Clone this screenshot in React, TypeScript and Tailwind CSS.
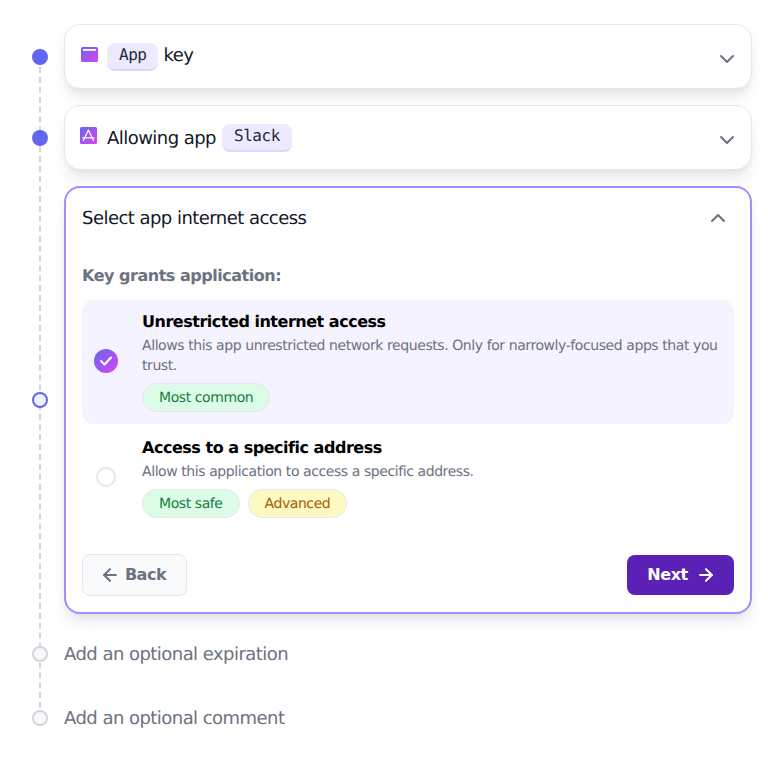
import { ArrowLeft, ArrowRight, ChevronDown, ChevronUp } from "lucide-react"

const gradientDefs = (
  <svg width="0" height="0" className="absolute">
    <defs>
      <linearGradient id="brand" x1="0" y1="0" x2="1" y2="1">
        <stop offset="0%" stopColor="#6366f1" />
        <stop offset="100%" stopColor="#d946ef" />
      </linearGradient>
    </defs>
  </svg>
)

function KeyIcon() {
  return (
    <svg width="17" height="15" viewBox="0 0 17 15" className="mb-1 shrink-0">
      <rect width="17" height="15" rx="1.5" fill="url(#brand)" />
      <rect x="2" y="2" width="13" height="1.8" fill="#fff" />
    </svg>
  )
}

function StoreIcon() {
  return (
    <svg width="17" height="17" viewBox="0 0 17 17" className="mb-1 -ml-px mr-px shrink-0">
      <rect width="17" height="17" rx="1.5" fill="url(#brand)" />
      <path
        d="M8.4 3 L3.4 13.6 M8.4 3 L13.4 13.6 M2.6 10.8 H14.2"
        stroke="#fff"
        strokeWidth="1.2"
        strokeLinecap="round"
        fill="none"
      />
    </svg>
  )
}

function Code({ children }: { children: string }) {
  return (
    <span className="inline-block rounded-lg border-b-2 border-[#ddd6fe] bg-[#ede9fe] px-3 pb-[3px] pt-px font-['DejaVu_Sans_Mono',monospace] text-base leading-[22px] text-gray-800">
      {children}
    </span>
  )
}

function Badge({ children, tone }: { children: string; tone: "green" | "yellow" }) {
  const toneClass = tone === "green" ? "bg-[#dcfce7] text-[#15803d]" : "bg-[#fef9c3] text-[#a16207]"
  return (
    <span className={`rounded-full border border-gray-200 px-4 pb-[3px] pt-[5px] text-sm leading-[19px] ${toneClass}`}>
      {children}
    </span>
  )
}

function Step({ dot, children }: { dot: string; children: React.ReactNode }) {
  return (
    <div className="relative flex items-center gap-4">
      <div className={`z-10 h-4 w-4 shrink-0 rounded-full ${dot}`}></div>
      {children}
    </div>
  )
}

const doneDot = "bg-[#6366f1]"
const todoDot = "border-2 border-[#d1d5db] bg-[#f9fafb]"

function CollapsedCard({ children }: { children: React.ReactNode }) {
  return (
    <div className="flex h-[65px] w-[688px] items-center justify-between rounded-2xl border border-gray-200 bg-white pl-4 pr-3 shadow-lg shadow-gray-300/60">
      <div className="flex items-center gap-[9px] text-lg text-gray-900">{children}</div>
      <ChevronDown className="mt-1 h-6 w-6 text-[#6b7280]" strokeWidth={2} />
    </div>
  )
}

export default function App() {
  return (
    <div className="relative flex flex-col gap-4 bg-white py-6 pl-8 pr-4 font-['DejaVu_Sans',sans-serif] [text-rendering:geometricPrecision] [&_*]:tracking-[-0.03em]">
      {gradientDefs}
      <div className="absolute left-[39px] top-[57px] h-[661px] border-l-2 border-dashed border-[#d1d5db]"></div>

      <Step dot={doneDot}>
        <CollapsedCard>
          <KeyIcon />
          <span className="flex items-center gap-[5px]">
            <Code>App</Code>
            <span className="mb-0.5">key</span>
          </span>
        </CollapsedCard>
      </Step>

      <Step dot={doneDot}>
        <CollapsedCard>
          <StoreIcon />
          <span className="flex items-center gap-1.5">
            <span className="mt-0.5">Allowing app</span>
            <Code>Slack</Code>
          </span>
        </CollapsedCard>
      </Step>

      <Step dot="border-2 border-[#6366f1] bg-[#eef2ff]">
        <div className="w-[688px] rounded-2xl border-2 border-[#a78bfa] bg-white p-4 shadow-lg shadow-gray-300/60">
          <div className="flex items-center justify-between pr-1">
            <span className="pt-0.5 text-lg leading-[26px] text-gray-900">Select app internet access</span>
            <ChevronUp className="h-6 w-6 text-[#6b7280]" strokeWidth={2} />
          </div>

          <p className="mt-8 text-base font-bold leading-6 text-[#6b7280]">Key grants application:</p>

          <div className="mt-3 flex flex-col gap-0.5">
            <div className="flex items-center gap-6 rounded-xl bg-[#f5f3ff] px-3 pb-3 pt-[9px]">
              <svg width="24" height="24" viewBox="0 0 24 24" className="shrink-0">
                <circle cx="12" cy="12" r="12" fill="url(#brand)" />
                <path d="M7 12 L10.5 15.5 L17 8.5" stroke="#fff" strokeWidth="2" fill="none" strokeLinecap="round" strokeLinejoin="round" />
              </svg>
              <div>
                <p className="text-base font-bold leading-[26px] text-black">Unrestricted internet access</p>
                <p className="pt-px text-sm leading-5 text-[#6b7280]">
                  Allows this app unrestricted network requests. Only for narrowly-focused apps that you trust.
                </p>
                <div className="mt-[7px] flex gap-2">
                  <Badge tone="green">Most common</Badge>
                </div>
              </div>
            </div>

            <div className="flex items-center gap-6 rounded-xl px-3 pb-3 pt-[9px]">
              <div className="mx-0.5 h-5 w-5 shrink-0 rounded-full border-2 border-gray-200 bg-white"></div>
              <div>
                <p className="text-base font-bold leading-[26px] text-black">Access to a specific address</p>
                <p className="pt-px text-sm leading-5 text-[#6b7280]">Allow this application to access a specific address.</p>
                <div className="mt-[7px] flex gap-2">
                  <Badge tone="green">Most safe</Badge>
                  <Badge tone="yellow">Advanced</Badge>
                </div>
              </div>
            </div>
          </div>

          <div className="mt-6 flex items-center justify-between">
            <button className="flex h-[42px] w-[105px] items-center justify-center gap-[5px] rounded-lg border border-gray-200 bg-gray-50 pr-[3px] text-base font-bold text-[#6b7280]">
              <ArrowLeft className="h-5 w-5" strokeWidth={2.5} />
              Back
            </button>
            <button className="flex h-10 w-[107px] items-center justify-center gap-2 rounded-lg bg-[#5b21b6] pl-0.5 text-base font-bold text-white">
              Next
              <ArrowRight className="h-5 w-5" strokeWidth={2.5} />
            </button>
          </div>
        </div>
      </Step>

      <Step dot={todoDot}>
        <span className="flex h-12 items-center pt-0.5 text-lg text-[#6b7280]">Add an optional expiration</span>
      </Step>

      <Step dot={todoDot}>
        <span className="flex h-12 items-center pt-0.5 text-lg text-[#6b7280]">Add an optional comment</span>
      </Step>
    </div>
  )
}
